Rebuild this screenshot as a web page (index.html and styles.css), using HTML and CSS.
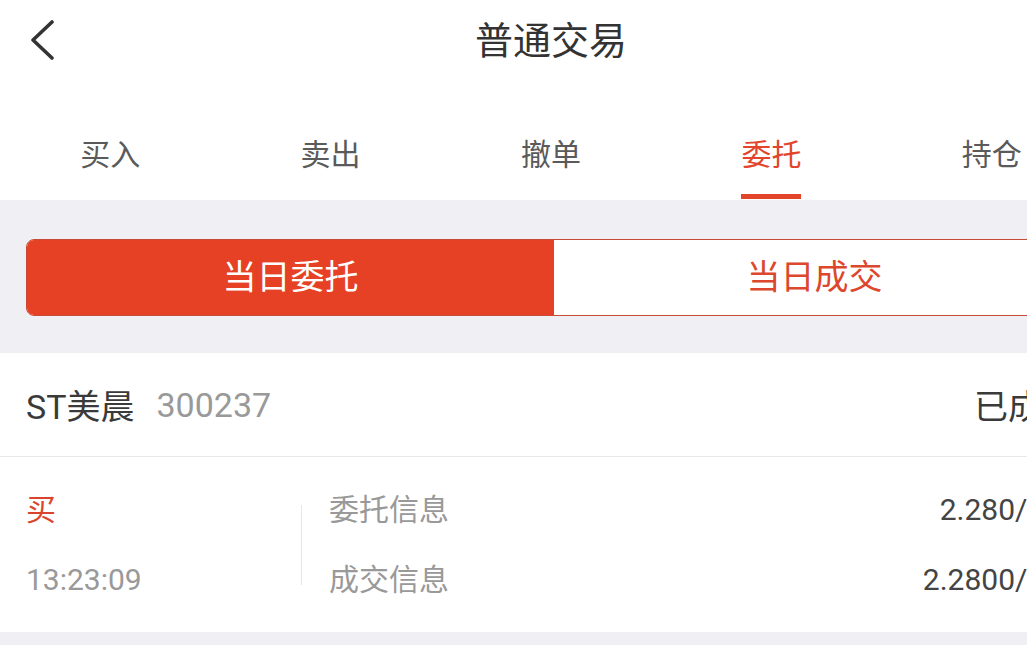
FILE: index.html
```html
<!DOCTYPE html>
<html lang="zh-CN">
<head>
<meta charset="utf-8">
<title>普通交易</title>
<link rel="stylesheet" href="styles.css">
</head>
<body>
<div class="page">
  <header class="nav">
    <div class="nav-left">
      <svg class="back" width="40" height="40" viewBox="0 0 40 40" aria-hidden="true">
        <polyline points="32,2 13,20 32,38" fill="none" stroke="#333" stroke-width="3.6" stroke-linecap="round" stroke-linejoin="round"/>
      </svg>
    </div>
    <h1 class="nav-title">普通交易</h1>
    <div class="nav-right"></div>
  </header>

  <nav class="tabs">
    <div class="tab">买入</div>
    <div class="tab">卖出</div>
    <div class="tab">撤单</div>
    <div class="tab active">委托</div>
    <div class="tab">持仓</div>
  </nav>

  <section class="filter">
    <div class="seg">
      <div class="seg-item active">当日委托</div>
      <div class="seg-item">当日成交</div>
    </div>
  </section>

  <section class="order">
    <div class="order-head">
      <div class="stock">
        <span class="name">ST美晨</span>
        <span class="code">300237</span>
      </div>
      <span class="status">已成交</span>
    </div>
    <div class="order-body">
      <div class="side">
        <div class="line dir">买</div>
        <div class="line time">13:23:09</div>
      </div>
      <div class="divider"></div>
      <div class="details">
        <div class="line row"><span class="label">委托信息</span><span class="val">2.280/100</span></div>
        <div class="line row"><span class="label">成交信息</span><span class="val">2.2800/100</span></div>
      </div>
    </div>
  </section>

  <div class="tail"></div>
</div>
</body>
</html>
```

FILE: styles.css
```css
* { box-sizing: border-box; }

html, body {
  margin: 0;
  padding: 0;
  overflow: hidden;
  background: #f0eff4;
}

body {
  font-family: Roboto, "Noto Sans CJK SC", "Noto Sans", sans-serif;
  color: #333;
}

.page {
  width: 1102px;
  background: #f0eff4;
}

/* nav bar */
.nav {
  height: 80px;
  background: #fff;
  display: grid;
  grid-template-columns: 1fr auto 1fr;
  align-items: center;
}

.nav-left {
  padding-left: 20px;
  display: flex;
  align-items: center;
}

.back { display: block; }

.nav-title {
  margin: 0;
  padding-top: 3px;
  font-size: 38px;
  font-weight: 400;
  line-height: 77px;
  color: #333;
}

/* tabs */
.tabs {
  height: 120px;
  background: #fff;
  padding-top: 55px;
  display: grid;
  grid-template-columns: repeat(5, 1fr);
}

.tab {
  display: flex;
  flex-direction: column;
  align-items: center;
  font-size: 30px;
  line-height: 40px;
  color: #5a5a5a;
}

.tab::after {
  content: "";
  display: block;
  width: 60px;
  height: 5px;
  margin-top: 19px;
  background: transparent;
}

.tab.active { color: #e2452b; }
.tab.active::after { background: #e2452b; }

/* segmented filter */
.filter {
  padding: 39px 26px 37px;
}

.seg {
  display: grid;
  grid-template-columns: 527px 1fr;
  border: 1px solid #c94a36;
  border-radius: 8px;
  overflow: hidden;
  background: #fff;
}

.seg-item {
  height: 75px;
  line-height: 75px;
  text-align: center;
  font-size: 34px;
  color: #dc472d;
}

.seg-item.active {
  background: #e64125;
  color: #fff;
}

/* order card */
.order { background: #fff; }

.order-head {
  height: 104px;
  padding: 0 26px;
  border-bottom: 1px solid #e8e8e8;
  display: flex;
  align-items: center;
  justify-content: space-between;
  font-size: 34px;
}

.stock { display: flex; align-items: center; }

.name { color: #3a3a3a; }

.code {
  margin-left: 22px;
  color: #999;
}

.status { color: #3a3a3a; }

.order-body {
  height: 175px;
  display: flex;
  align-items: center;
}

.line {
  height: 40px;
  line-height: 40px;
  font-size: 30px;
}

.line + .line { margin-top: 30px; }

.side {
  width: 301px;
  padding-left: 26px;
}

.dir { color: #d9452c; }
.time { color: #999; }

.divider {
  width: 1px;
  height: 80px;
  background: #e6e6e6;
}

.details {
  flex: 1;
  padding: 0 24px 0 27px;
}

.row {
  display: flex;
  justify-content: space-between;
}

.label { color: #999; }
.val { color: #444; }

.tail { height: 40px; }
```
